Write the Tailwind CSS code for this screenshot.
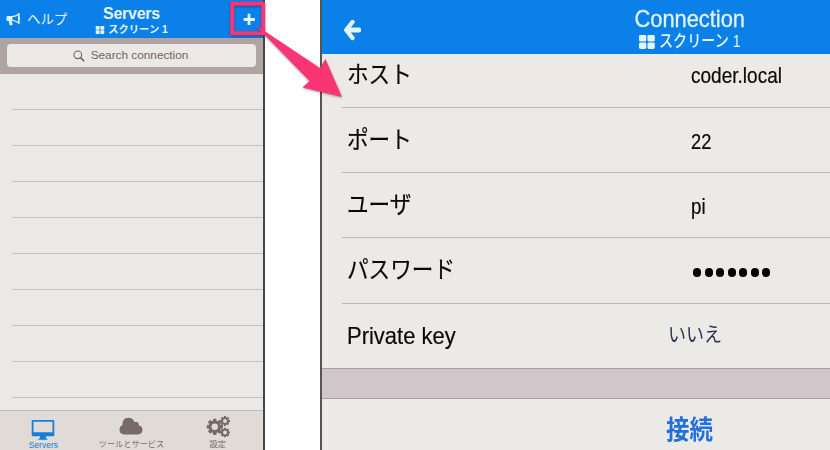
<!DOCTYPE html>
<html lang="ja">
<head>
<meta charset="utf-8">
<title>Connection</title>
<script src="https://cdn.jsdelivr.net/npm/@tailwindcss/browser@4"></script>
</head>
<body class="relative flex h-[450px] w-[830px] overflow-hidden bg-white font-['Liberation_Sans','Noto_Sans_CJK_JP',sans-serif] whitespace-nowrap">
<svg class="hidden">
  <symbol id="tiles" viewBox="0 0 16 14"><rect width="7.3" height="6.4" rx="1.3"/><rect x="8.5" width="7.3" height="6.4" rx="1.3"/><rect y="7.5" width="7.3" height="6.4" rx="1.3"/><rect x="8.5" y="7.5" width="7.3" height="6.4" rx="1.3"/></symbol>
  <symbol id="gear" viewBox="-10 -10 20 20"><circle r="5.8" fill="none" stroke="currentColor" stroke-width="3.8"/><path d="M0-10V-6M0 6V10M-10 0H-6M6 0H10M-7-7L-4.5-4.5M4.5 4.5L7 7M-7 7L-4.5 4.5M4.5-4.5L7-7" stroke="currentColor" stroke-width="4"/></symbol>
</svg>

<section class="flex h-full w-[265px] shrink-0 flex-col border-r-2 border-[#454545] bg-[#ebe9e5]">
  <header class="grid h-[38px] shrink-0 grid-cols-[70px_1fr_70px] bg-[#0b80e9] text-[#e3f3fa]">
    <div class="flex items-center gap-[6px] pl-[6px]">
      <svg class="h-[13px] w-[15px]" viewBox="0 0 15 13"><path d="M1.6 3H6.5V8H5.6L6.7 11.4L5.5 12.3H3.7L2.7 8H1.6Q.5 8 .5 6.8V4.2Q.5 3 1.6 3Z" fill="currentColor"/><path d="M6.3 3.6Q10 3.4 12.7 1V10Q10 7.8 6.3 7.4" fill="none" stroke="currentColor" stroke-width="1.3"/><path d="M12.4.5h1.1v3.8q1.2 1.1 0 2.3v4h-1.1Z" fill="currentColor"/></svg>
      <span class="pt-[2px] text-[13.4px] leading-[20px]">ヘルプ</span>
    </div>
    <div class="flex flex-col items-center pt-[5px]">
      <span class="text-[16px] leading-[18px] font-bold tracking-[-0.25px]">Servers</span>
      <span class="flex items-center gap-[3px] text-[10.3px] leading-[13px] font-bold"><svg class="h-[8px] w-[10px]" fill="currentColor" viewBox="0 0 16 14"><use href="#tiles" width="16" height="14"/></svg><span>スクリーン 1</span></span>
    </div>
    <div class="flex items-center justify-end pr-[8px]">
      <svg class="h-[12px] w-[12px]" viewBox="0 0 12 12"><path d="M6 1.8V11.2M1.8 6.5H11" stroke="currentColor" stroke-width="2.8" stroke-linecap="round"/></svg>
    </div>
  </header>
  <div class="h-[36px] shrink-0 bg-[#b0a4a2] px-[7px] pt-[6px]">
    <div class="flex h-[23px] w-[249px] items-center justify-center gap-[6px] rounded-[4px] bg-[#ebe9e5] pr-[2px] text-[11.8px] text-[#706461]">
      <svg class="h-[12px] w-[12px]" viewBox="0 0 12 12" fill="none" stroke="currentColor" stroke-width="1.1"><circle cx="4.8" cy="4.8" r="3.8"/><path d="M7.6 7.6L11.2 11.2" stroke-width="1.6"/></svg>
      <span>Search connection</span>
    </div>
  </div>
  <div class="min-h-0 flex-1 overflow-hidden pl-[12px]">
    <div class="h-[36px] border-b border-[#c6c2bf]"></div>
    <div class="h-[36px] border-b border-[#c6c2bf]"></div>
    <div class="h-[36px] border-b border-[#c6c2bf]"></div>
    <div class="h-[36px] border-b border-[#c6c2bf]"></div>
    <div class="h-[36px] border-b border-[#c6c2bf]"></div>
    <div class="h-[36px] border-b border-[#c6c2bf]"></div>
    <div class="h-[36px] border-b border-[#c6c2bf]"></div>
    <div class="h-[36px] border-b border-[#c6c2bf]"></div>
    <div class="h-[36px] border-b border-[#c6c2bf]"></div>
  </div>
  <nav class="grid h-[40px] shrink-0 grid-cols-3 border-t border-[#c0bbb7] bg-[#e0dbd7] text-[8.2px] text-[#776b65]">
    <div class="flex flex-col items-center pt-[8px] pr-[1px] text-[#1480dc]">
      <svg class="h-[21px] w-[24px]" viewBox="0 0 24 21"><path d="M2 1H22Q23.3 1 23.3 2.3V16Q23.3 17.2 22 17.2H15V19L16.5 20V20.8H7.5V20L9 19V17.2H2Q.7 17.2.7 16V2.3Q.7 1 2 1ZM2.5 2.8V13.3H21.500V2.8Z" fill="currentColor" fill-rule="evenodd"/></svg>
      <span class="text-[8.5px] leading-[10px]">Servers</span>
    </div>
    <div class="flex flex-col items-center pt-[6px]">
      <svg class="h-[18px] w-[24px]" viewBox="0 0 24 18"><path d="M5 17.5Q.5 17 .5 12.5Q.5 9.2 3.5 8Q3 1 9.4.7Q14 .8 15.3 5Q19.5 3.5 20 8.5Q23.5 9.3 23.5 13Q23.2 17.2 19 17.5Z" fill="currentColor"/></svg>
      <span class="mt-[5px] leading-[10px]">ツールとサービス</span>
    </div>
    <div class="flex flex-col items-center pt-[5px] pr-[3px]">
      <svg class="h-[22px] w-[24px]" viewBox="0 0 24 22"><use href="#gear" x="0.5" y="2.5" width="16.5" height="16.5"/><use href="#gear" x="14" y="0" width="10" height="10"/><use href="#gear" x="14" y="11.5" width="10" height="10"/></svg>
      <span class="mt-[2px] leading-[10px]">設定</span>
    </div>
  </nav>
</section>

<section class="ml-[55px] flex h-full w-[510px] shrink-0 flex-col border-l-2 border-[#555] bg-[#ebeae6] text-[#090909]">
  <header class="flex h-[54px] shrink-0 bg-[#0b80e9] text-[#e3f3fa]">
    <div class="w-[260px] pt-[19px] pl-[21px]">
      <svg class="h-[22px] w-[18px]" viewBox="0 0 18 22" fill="none" stroke="currentColor" stroke-width="5" stroke-linejoin="round" stroke-linecap="round"><path d="M9.5 3L3.2 11L9.5 19" stroke-width="4.4"/><path d="M4.5 11H15.7"/></svg>
    </div>
    <div class="flex w-[216px] flex-col items-center pt-[5px]">
      <span class="scale-x-[.91] text-[24px] leading-[27px] [-webkit-text-stroke:0.3px_currentColor]">Connection</span>
      <span class="flex items-center gap-[4px] text-[17px] leading-[20px] font-medium"><svg class="h-[14px] w-[16px] shrink-0" fill="currentColor" viewBox="0 0 16 14"><use href="#tiles" width="16" height="14"/></svg><span class="w-[82px] origin-left scale-x-[.83]">スクリーン 1</span></span>
    </div>
  </header>
  <div class="ml-[20px] grid h-[54px] shrink-0 grid-cols-[344px_1fr] border-b border-[#bdb9b4] pl-[5px]">
    <span class="origin-left scale-x-[.9] text-[24px] leading-[41px] [-webkit-text-stroke:0.2px_currentColor]">ホスト</span>
    <span class="origin-left scale-x-[.885] text-[21.5px] leading-[44px] [-webkit-text-stroke:0.2px_currentColor]">coder.local</span>
  </div>
  <div class="ml-[20px] grid h-[65px] shrink-0 grid-cols-[344px_1fr] border-b border-[#bdb9b4] pl-[5px]">
    <span class="origin-left scale-x-[.9] text-[24px] leading-[63px] [-webkit-text-stroke:0.2px_currentColor]">ポート</span>
    <span class="origin-left scale-x-[.85] text-[21.5px] leading-[68px] [-webkit-text-stroke:0.2px_currentColor]">22</span>
  </div>
  <div class="ml-[20px] grid h-[65px] shrink-0 grid-cols-[344px_1fr] border-b border-[#bdb9b4] pl-[5px]">
    <span class="origin-left scale-x-[.9] text-[24px] leading-[63px] [-webkit-text-stroke:0.2px_currentColor]">ユーザ</span>
    <span class="origin-left scale-x-[.87] text-[21.5px] leading-[68px] [-webkit-text-stroke:0.2px_currentColor]">pi</span>
  </div>
  <div class="ml-[20px] grid h-[66px] shrink-0 grid-cols-[344px_1fr] border-b border-[#bdb9b4] pl-[5px]">
    <span class="origin-left scale-x-[.9] text-[24px] leading-[63px] [-webkit-text-stroke:0.2px_currentColor]">パスワード</span>
    <span class="flex items-center gap-[3.5px] pt-[3px] pl-[2px]">
      <i class="h-[9px] w-[8px] rounded-full bg-black"></i><i class="h-[9px] w-[8px] rounded-full bg-black"></i><i class="h-[9px] w-[8px] rounded-full bg-black"></i><i class="h-[9px] w-[8px] rounded-full bg-black"></i><i class="h-[9px] w-[8px] rounded-full bg-black"></i><i class="h-[9px] w-[8px] rounded-full bg-black"></i><i class="h-[9px] w-[8px] rounded-full bg-black"></i>
    </span>
  </div>
  <div class="ml-[20px] grid h-[64px] shrink-0 grid-cols-[321px_1fr] pl-[5px]">
    <span class="origin-left scale-x-[.915] text-[24px] leading-[64px] [-webkit-text-stroke:0.2px_currentColor]">Private key</span>
    <span class="origin-left scale-x-[.9] text-[20px] leading-[62px] text-[#30304f]">いいえ</span>
  </div>
  <div class="h-[31px] shrink-0 border-y border-[#a99fa2] bg-[#d1c7cb]"></div>
  <div class="flex flex-1 pl-[344px]">
    <span class="origin-left scale-x-[.9] text-[26px] leading-[63px] font-bold text-[#236fdc]">接続</span>
  </div>
</section>

<svg class="absolute top-0 left-0 h-[110px] w-[360px] drop-shadow-[0_1px_1px_rgba(0,0,0,0.35)]" viewBox="0 0 360 110">
  <rect x="232.2" y="3.7" width="31" height="29.6" fill="none" stroke="#fb3476" stroke-width="4"/>
  <path d="M254 24L320 68L325.5 59L342 97L302.5 87.5L309.5 81Z" fill="#fb3476"/>
</svg>
</body>
</html>
